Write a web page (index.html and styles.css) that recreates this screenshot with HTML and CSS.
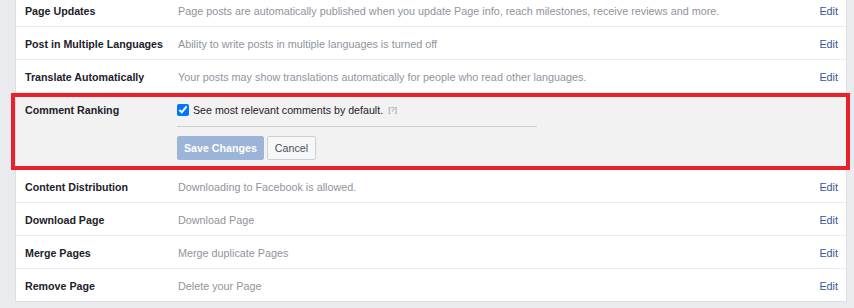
FILE: index.html
```html
<!DOCTYPE html>
<html>
<head>
<meta charset="utf-8">
<link rel="stylesheet" href="styles.css">
</head>
<body>
<div class="panel">
  <div class="row">
    <div class="label">Page Updates</div>
    <div class="desc">Page posts are automatically published when you update Page info, reach milestones, receive reviews and more.</div>
    <a class="edit">Edit</a>
  </div>
  <div class="row">
    <div class="label">Post in Multiple Languages</div>
    <div class="desc">Ability to write posts in multiple languages is turned off</div>
    <a class="edit">Edit</a>
  </div>
  <div class="row">
    <div class="label">Translate Automatically</div>
    <div class="desc">Your posts may show translations automatically for people who read other languages.</div>
    <a class="edit">Edit</a>
  </div>
  <div class="row row-editing">
    <div class="label">Comment Ranking</div>
    <div class="editor">
      <label class="check"><input type="checkbox" checked><span>See most relevant comments by default.</span><span class="help">[?]</span></label>
      <div class="sep"></div>
      <div class="actions">
        <button class="btn btn-primary">Save Changes</button>
        <button class="btn">Cancel</button>
      </div>
    </div>
    <div class="highlight"></div>
  </div>
  <div class="row">
    <div class="label">Content Distribution</div>
    <div class="desc">Downloading to Facebook is allowed.</div>
    <a class="edit">Edit</a>
  </div>
  <div class="row">
    <div class="label">Download Page</div>
    <div class="desc">Download Page</div>
    <a class="edit">Edit</a>
  </div>
  <div class="row">
    <div class="label">Merge Pages</div>
    <div class="desc">Merge duplicate Pages</div>
    <a class="edit">Edit</a>
  </div>
  <div class="row">
    <div class="label">Remove Page</div>
    <div class="desc">Delete your Page</div>
    <a class="edit">Edit</a>
  </div>
</div>
</body>
</html>
```
FILE: styles.css
```css
html, body {
  margin: 0;
  padding: 0;
  background: #e9ebee;
  font-family: "Liberation Sans", Arial, sans-serif;
  font-size: 10.67px;
}
.panel {
  margin: -6px 0 0 15px;
  width: 832px;
  box-sizing: border-box;
  background: #fff;
  border: 1px solid #dddfe2;
  border-top: none;
}
.row {
  position: relative;
  display: flex;
  align-items: flex-start;
  padding: 9px 8px 7px 9px;
  line-height: 16px;
  border-bottom: 1px solid #e9ebee;
}
.row:last-child {
  border-bottom: none;
}
.label {
  width: 153px;
  flex: none;
  font-weight: bold;
  color: #1d2129;
}
.desc {
  flex: 1;
  color: #90949c;
  font-size: 10.8px;
}
.edit {
  color: #365899;
  font-size: 10.8px;
  cursor: pointer;
}
.row-editing {
  background: #f2f2f2;
  padding-top: 9px;
  padding-bottom: 9px;
}
.editor {
  flex: 1;
  margin-left: -1px;
}
.check {
  display: flex;
  align-items: center;
  color: #1d2129;
  height: 16px;
}
.check input {
  margin: 0 4px 0 0;
  width: 12px;
  height: 12px;
}
.help {
  color: #90949c;
  font-size: 8px;
  margin-left: 5px;
}
.sep {
  width: 360px;
  height: 1px;
  background: #ccd0d5;
  margin-top: 8px;
}
.actions {
  display: flex;
  gap: 3px;
  margin-top: 9px;
}
.btn {
  height: 24px;
  box-sizing: border-box;
  padding: 0 7px;
  font-family: "Liberation Sans", Arial, sans-serif;
  font-size: 10.67px;
  border: 1px solid #ced0d4;
  background: #f6f7f9;
  color: #4b4f56;
  border-radius: 2px;
}
.btn-primary {
  padding: 0 6px;
  background: #9cb4d8;
  border-color: #9cb4d8;
  color: #fff;
  font-weight: bold;
}
.highlight {
  position: absolute;
  left: -5px;
  right: -4px;
  top: 0;
  bottom: -1px;
  border: 4px solid #e8212b;
  pointer-events: none;
}
```
